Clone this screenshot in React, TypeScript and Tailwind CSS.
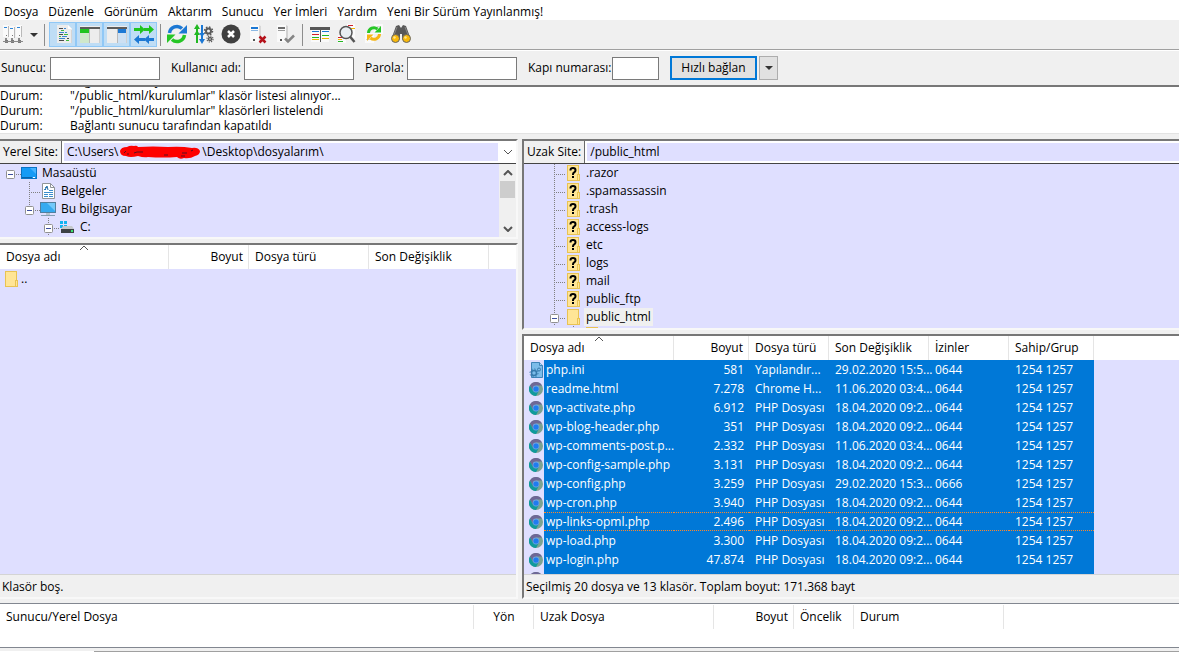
import type { ReactNode } from 'react';
import clsx from 'clsx';

interface RemoteFile {
  name: string;
  size: string;
  type: string;
  modified: string;
  perms: string;
  owner: string;
}

const menuItems = ['Dosya', 'Düzenle', 'Görünüm', 'Aktarım', 'Sunucu', 'Yer İmleri', 'Yardım', 'Yeni Bir Sürüm Yayınlanmış!'];

const logLines = [
  'Bağlantı kuruluyor...',
  '"/public_html/kurulumlar" klasör listesi alınıyor...',
  '"/public_html/kurulumlar" klasörleri listelendi',
  'Bağlantı sunucu tarafından kapatıldı',
];

const remoteFolders = ['.razor', '.spamassassin', '.trash', 'access-logs', 'etc', 'logs', 'mail', 'public_ftp'];

const php = (name: string, size: string, modified = '18.04.2020 09:2...', perms = '0644'): RemoteFile => ({
  name,
  size,
  type: 'PHP Dosyası',
  modified,
  perms,
  owner: '1254 1257',
});

const remoteFiles: RemoteFile[] = [
  { name: 'php.ini', size: '581', type: 'Yapılandır...', modified: '29.02.2020 15:5...', perms: '0644', owner: '1254 1257' },
  { name: 'readme.html', size: '7.278', type: 'Chrome H...', modified: '11.06.2020 03:4...', perms: '0644', owner: '1254 1257' },
  php('wp-activate.php', '6.912'),
  php('wp-blog-header.php', '351'),
  php('wp-comments-post.p...', '2.332', '11.06.2020 03:4...'),
  php('wp-config-sample.php', '3.131'),
  php('wp-config.php', '3.259', '29.02.2020 15:3...', '0666'),
  php('wp-cron.php', '3.940'),
  php('wp-links-opml.php', '2.496'),
  php('wp-load.php', '3.300'),
  php('wp-login.php', '47.874'),
  { name: '', size: '', type: '', modified: '', perms: '', owner: '' },
];

const focusedFile = 'wp-links-opml.php';

/* ---------- Toolbar icons ---------- */

function Svg({ children }: { children: ReactNode }) {
  return (
    <svg width="20" height="20" viewBox="0 0 20 20" fill="none" className="shrink-0" aria-hidden="true">
      {children}
    </svg>
  );
}

function SiteManagerIcon() {
  return (
    <Svg>
      {[0, 6, 13].map((x, i) => (
        <g key={x}>
          <rect x={x} y={i === 1 ? 2 : 1} width="6" height="12" fill="#fafafa" />
          <rect x={x + 5} y={i === 1 ? 3 : 2} width="1" height="11" fill="#b9b9b9" />
          <rect x={x + 1} y={i === 1 ? 4 : 3} width="3" height="1" fill="#2f86d8" />
          <rect x={x + 3} y="11" width="1" height="1" fill="#777" />
          <rect x={x + 2} y="14" width="2" height="2" fill="#8c8c8c" />
          <rect x={x + 2} y="16" width="3" height="3" fill="#777" />
        </g>
      ))}
      <path d="M0 17.500h20" stroke="#8c8c8c" />
    </Svg>
  );
}

function LogIcon() {
  return (
    <Svg>
      <path d="M4 1h11l4 4v14H4z" fill="#ececec" />
      <path d="M15 1v4h4z" fill="#fff" />
      <path d="M18.500 6v13" stroke="#d5d5d5" />
      <path d="M6 4.500h4M6 10.500h4M6 16.500h5" stroke="#4a4a4a" />
      <path d="M8 6.500h3M11 10.500h4M6 12.500h2M13 16.500h3" stroke="#3fb83f" />
      <path d="M6 8.500h5M12 8.500h2M9 12.500h5M6 14.500h6M11 4.500h2" stroke="#3d86cf" />
      <path d="M14 14.500h2" stroke="#4a4a4a" />
    </Svg>
  );
}

function LocalTreeIcon() {
  return (
    <Svg>
      <rect x="0" y="2" width="20" height="17" fill="#ededed" />
      <rect x="0" y="3" width="20" height="2" fill="#5c5c5c" />
      <rect x="0" y="5" width="9" height="4" fill="#1fc41f" />
      <rect x="0" y="9" width="9" height="10" fill="#cfe8cb" />
      <path d="M9.500 5v14" stroke="#b9b9b9" />
      <path d="M19.500 5v14" stroke="#cfcfcf" />
    </Svg>
  );
}

function RemoteTreeIcon() {
  return (
    <Svg>
      <rect x="0" y="2" width="20" height="17" fill="#ededed" />
      <rect x="0" y="3" width="20" height="2" fill="#5c5c5c" />
      <rect x="11" y="5" width="8" height="4" fill="#1c78d4" />
      <rect x="11" y="9" width="8" height="10" fill="#cde0f3" />
      <path d="M10.500 5v14" stroke="#b9b9b9" />
      <path d="M19.500 5v14" stroke="#cfcfcf" />
    </Svg>
  );
}

function QueueIcon() {
  return (
    <Svg>
      <path d="M0 4h6V1l5 4.500L6 10V7H0z" fill="#1fc41f" />
      <path d="M10 4h5V1l5 4.500-5 4.500V7h-5z" fill="#1fc41f" />
      <path d="M20 14h-5v-3l-5 4.500 5 4.500v-3h5z" fill="#1c78d4" />
      <path d="M11 14H5v-3l-5 4.500L5 20v-3h6z" fill="#1c78d4" />
    </Svg>
  );
}

function RefreshIcon() {
  return (
    <Svg>
      <path d="M2.500 9A7.500 7.500 0 0 1 15 4.500" stroke="#1c78d4" strokeWidth="3.500" />
      <path d="M20 1v8.500h-8.500z" fill="#1c78d4" />
      <path d="M17.500 11A7.500 7.500 0 0 1 5 15.500" stroke="#26c626" strokeWidth="3.500" />
      <path d="M0 19v-8.500h8.500z" fill="#26c626" />
    </Svg>
  );
}

function ProcessQueueIcon() {
  return (
    <Svg>
      <path d="M3 19V3" stroke="#22b822" strokeWidth="2" />
      <path d="M0 5l3-5 3 5zM0 11l3-5 3 5z" fill="#22b822" />
      <path d="M8 1v16" stroke="#1c78d4" strokeWidth="2" />
      <path d="M5 15l3 5 3-5zM5 9l3 4 3-4z" fill="#1c78d4" />
      <circle cx="14.500" cy="7" r="2.500" stroke="#5b5b5b" strokeWidth="2" />
      <circle cx="14.500" cy="7" r="4" stroke="#5b5b5b" strokeWidth="1.500" strokeDasharray="1.600 1.540" />
      <circle cx="16" cy="15" r="1.500" stroke="#5b5b5b" strokeWidth="1.500" />
      <circle cx="16" cy="15" r="3" stroke="#5b5b5b" strokeWidth="1.200" strokeDasharray="1.200 1.150" />
    </Svg>
  );
}

function CancelIcon() {
  return (
    <Svg>
      <circle cx="10" cy="10" r="9.500" fill="#404040" />
      <path d="M7 7l6 6M13 7l-6 6" stroke="#fff" strokeWidth="2.500" />
    </Svg>
  );
}

function DisconnectIcon() {
  return (
    <Svg>
      <path d="M2 1h9l2 1v16H2z" fill="#fafafa" />
      <path d="M11 1l2 1v16h-2z" fill="#d8d8d8" />
      <path d="M3 4h7" stroke="#1c78d4" strokeWidth="2" />
      <path d="M3 6.500h7" stroke="#8cb9e4" />
      <rect x="5" y="15" width="2" height="2" fill="#555" />
      <path d="M11.500 12.500l6 6M17.500 12.500l-6 6" stroke="#b5121b" strokeWidth="2.500" />
    </Svg>
  );
}

function ReconnectIcon() {
  return (
    <Svg>
      <path d="M2 1h9l2 1v16H2z" fill="#fafafa" />
      <path d="M11 1l2 1v16h-2z" fill="#d2d2d2" />
      <path d="M3 4h7" stroke="#6d6d6d" strokeWidth="2" />
      <path d="M3 6.500h7" stroke="#9d9d9d" />
      <rect x="5" y="15" width="2" height="2" fill="#555" />
      <path d="M10 14.500l3 3 6-6" stroke="#858585" strokeWidth="2.500" />
    </Svg>
  );
}

function FilterIcon() {
  return (
    <Svg>
      <rect x="1" y="3" width="18" height="15" fill="#fafafa" />
      <rect x="0" y="3" width="20" height="3" fill="#555" />
      <path d="M10.500 5v13" stroke="#555" />
      <path d="M2 7.500h7" stroke="#1c78d4" />
      <path d="M2 10.500h7" stroke="#d0202a" />
      <path d="M2 13.500h7" stroke="#22b822" />
      <path d="M2 15.500h7" stroke="#f0b400" />
      <path d="M12 7.500h7" stroke="#1c78d4" />
      <path d="M12 11.500h7" stroke="#22b822" />
      <path d="M12 14.500h7" stroke="#f0b400" />
    </Svg>
  );
}

function CompareIcon() {
  return (
    <Svg>
      <path d="M10 0h8v14h-8zM1 11h8v8H1z" fill="#fafafa" />
      <path d="M11 1.500h5" stroke="#d0202a" />
      <path d="M14 4.500h4" stroke="#f0b400" />
      <path d="M1 13.500h4" stroke="#d0202a" />
      <path d="M1 15.500h4" stroke="#f0b400" />
      <path d="M1 17.500h5" stroke="#22b822" />
      <circle cx="9" cy="8.500" r="6" fill="#e8eef2" stroke="#555" strokeWidth="1.500" />
      <path d="M13 12.500l4.500 5.500" stroke="#555" strokeWidth="2.500" />
    </Svg>
  );
}

function SyncBrowseIcon() {
  return (
    <Svg>
      <path d="M10 0h9v10h-9zM1 9h9v10H1z" fill="#fafafa" />
      <path d="M2 15.500h4M13 2.500h4" stroke="#d3d3d3" />
      <path d="M4.500 9A5.500 5.500 0 0 1 13.500 5" stroke="#26c626" strokeWidth="3" />
      <path d="M17 2v6.500h-6.500z" fill="#26c626" />
      <path d="M15.500 10A5.500 5.500 0 0 1 6.500 14" stroke="#f5b514" strokeWidth="3" />
      <path d="M3 17v-6.500h6.500z" fill="#f5b514" />
    </Svg>
  );
}

function SearchIcon() {
  return (
    <Svg>
      <path d="M5 2l3-1 2 3 2-3 3 1 4 11-5 5-3-3V10H9v5l-3 3-5-5z" fill="#585858" />
      <path d="M6 3L3 11M14 3l3 8" stroke="#858585" />
      <circle cx="4.500" cy="14.500" r="4" fill="#f9b90a" stroke="#666" />
      <circle cx="15.500" cy="14.500" r="4" fill="#f9b90a" stroke="#666" />
      <circle cx="3.500" cy="13.500" r="1.200" fill="#ffe78c" />
      <circle cx="14.500" cy="13.500" r="1.200" fill="#ffe78c" />
    </Svg>
  );
}

/* ---------- Tree and file icons ---------- */

function FolderIcon({ unknown = false }: { unknown?: boolean }) {
  return (
    <svg width="13" height="16" viewBox="0 0 13 16" className="shrink-0" aria-hidden="true">
      <rect x="0.500" y="0.500" width="11" height="15" fill="#ffe596" stroke="#e9c353" />
      <rect x="10.500" y="9.500" width="2" height="6" fill="#ffe596" stroke="#e9c353" />
      {unknown && (
        <>
          <path d="M3.500 5.500V5Q3.500 3 6 3T8.500 5.200Q8.500 6.500 7.200 7.300T6 9.500V10" stroke="#000" strokeWidth="2" fill="none" />
          <rect x="5" y="11" width="2" height="2" fill="#000" />
        </>
      )}
    </svg>
  );
}

function DesktopIcon() {
  return (
    <svg width="17" height="12" viewBox="0 0 17 12" aria-hidden="true">
      <rect x="0.500" y="0.500" width="15" height="11" fill="#169bf5" stroke="#0b74c4" />
      <path d="M9 1h6v6z" fill="#48b4ff" />
      <path d="M1 10.500h10" stroke="#0a63ab" />
      <path d="M12 10.500h2" stroke="#fff" />
    </svg>
  );
}

function DocumentIcon() {
  return (
    <svg width="13" height="16" viewBox="0 0 13 16" aria-hidden="true">
      <path d="M.5.500h8l4 4v11H.5z" fill="#fff" stroke="#8f9499" />
      <path d="M8.500.500v4h4" fill="none" stroke="#8f9499" />
      <path d="M2 6.500h2M3 4.500h2M2 9.500h9M2 11.500h4M7 11.500h4M2 13.500h4M7 13.500h4M7 7.500h4" stroke="#3b8dcc" />
      <path d="M3 7l2-4 1 4" fill="none" stroke="#246ca5" />
    </svg>
  );
}

function ComputerIcon() {
  return (
    <svg width="17" height="15" viewBox="0 0 17 15" aria-hidden="true">
      <rect x="0.500" y="0.500" width="15" height="10" fill="#36aaf0" stroke="#527f9e" />
      <path d="M7 1h8v8z" fill="#72c8fa" />
      <path d="M6 11h4v2H6z" fill="#b5c3cd" />
      <path d="M1 13.500h14" stroke="#85a0b3" />
    </svg>
  );
}

function DriveIcon() {
  return (
    <svg width="17" height="14" viewBox="0 0 17 14" aria-hidden="true">
      <path d="M1 1h3v3H1zM5 1h3v3H5zM1 5h3v3H1zM5 5h3v3H5z" fill="#11b4f0" />
      <path d="M4 6h9l2 3H2z" fill="#c5c9cc" />
      <rect x="2" y="9" width="13" height="4" fill="#3d4145" />
      <rect x="12" y="10" width="2" height="2" fill="#3ce26f" />
    </svg>
  );
}

function ChromeIcon() {
  return (
    <svg width="14" height="14" viewBox="0 0 14 14" aria-hidden="true">
      <circle cx="7" cy="7" r="7" fill="#7ca391" />
      <path d="M.9 3.500A7 7 0 0 1 13.100 3.500H7L4 8.500z" fill="#6e6796" />
      <path d="M.9 3.500A7 7 0 0 0 7 14l3-5.300H4z" fill="#109a9c" />
      <circle cx="7" cy="7" r="3.400" fill="#6fa3e0" />
      <circle cx="7" cy="7" r="2.600" fill="#1f7cf0" />
    </svg>
  );
}

function IniIcon() {
  return (
    <svg width="14" height="16" viewBox="0 0 14 16" aria-hidden="true">
      <path d="M2.500.500h8l3 3v12h-11z" fill="#7cbce9" stroke="#3f84b8" />
      <path d="M10.500.500v3h3" fill="#a9d6f5" stroke="#3f84b8" />
      <circle cx="5" cy="11" r="2.500" fill="#7cbce9" stroke="#3679ac" strokeWidth="1.500" />
      <circle cx="5" cy="11" r="4" fill="none" stroke="#3679ac" strokeDasharray="1.500 1.600" />
      <circle cx="10" cy="7.500" r="1.500" fill="none" stroke="#3679ac" />
    </svg>
  );
}

function Chevron({ up = false, bold = false }: { up?: boolean; bold?: boolean }) {
  return (
    <svg width="10" height="6" viewBox="0 0 10 6" fill="none" aria-hidden="true">
      <path d={up ? 'M1 5l4-4 4 4' : 'M1 1l4 4 4-4'} stroke="#555" strokeWidth={bold ? 2 : 1} />
    </svg>
  );
}

function DropArrow() {
  return (
    <svg width="8" height="4" viewBox="0 0 8 4" aria-hidden="true">
      <path d="M0 0h8L4 4z" fill="#333" />
    </svg>
  );
}

/* ---------- Building blocks ---------- */

function ToolButton({ label, pressed = false, children }: { label: string; pressed?: boolean; children: ReactNode }) {
  return (
    <button
      type="button"
      aria-label={label}
      aria-pressed={pressed}
      className={clsx(
        'flex h-[25px] w-[27px] shrink-0 items-start border pt-px',
        pressed ? 'border-[#90c8f6] bg-[#bfddf5] pl-[3px]' : 'border-transparent pl-0.5',
      )}
    >
      {children}
    </button>
  );
}

function ToolSeparator({ tight = false }: { tight?: boolean }) {
  return <div className={clsx('h-[22px] w-px shrink-0 bg-[#8d8d8d]', tight ? 'mx-[3px]' : 'ml-[3px] mr-1')} />;
}

function TextField({ label, labelClass, inputClass }: { label: string; labelClass: string; inputClass: string }) {
  return (
    <label className="mr-[11px] flex items-center">
      <span className={clsx('shrink-0 whitespace-nowrap', labelClass)}>{label}</span>
      <input type="text" className={clsx('h-[23px] border border-[#7a7a7a] bg-white px-1', inputClass)} />
    </label>
  );
}

interface TreeRowProps {
  label: string;
  icon: ReactNode;
  indent: number;
  line: number;
  up?: boolean;
  down?: boolean;
  box?: boolean;
  active?: boolean;
}

function TreeRow({ label, icon, indent, line, up, down, box, active }: TreeRowProps) {
  const x = line + 0.5;
  return (
    <li className="flex h-[18px] items-center">
      <svg width={indent} height="18" className="shrink-0" fill="none" aria-hidden="true">
        <g stroke="#808080" strokeDasharray="1 1">
          {up && <path d={`M${x} 0V10`} />}
          {down && <path d={`M${x} 10V18`} />}
          <path d={`M${line} 10.500H${indent}`} />
        </g>
        {box && (
          <>
            <rect x={x - 4} y="6.500" width="8" height="8" rx="1" fill="#fff" stroke="#919191" />
            <path d={`M${line - 2} 10.500h5`} stroke="#3c4fa0" />
          </>
        )}
      </svg>
      <span className="flex w-[19px] shrink-0 justify-center pr-0.5">{icon}</span>
      <span className={clsx('px-0.5 leading-[18px]', active && 'bg-[#f0f0f0]')}>{label}</span>
    </li>
  );
}

function HeaderCell({ children, align = 'left', sorted = false }: { children?: ReactNode; align?: 'left' | 'right' | 'center'; sorted?: boolean }) {
  return (
    <th
      scope="col"
      aria-sort={sorted ? 'ascending' : undefined}
      className={clsx(
        'relative h-6 border-r border-[#e5e5e5] bg-white pr-[5px] pl-1.5 font-normal whitespace-nowrap',
        align === 'left' && 'text-left',
        align === 'right' && 'text-right',
        align === 'center' && 'text-center',
      )}
    >
      {sorted && (
        <span className="absolute top-0 left-1/2 -translate-x-1/2">
          <Chevron up />
        </span>
      )}
      {children}
    </th>
  );
}

function SiteBar({ label, value, id }: { label: string; value: ReactNode; id: string }) {
  return (
    <div className="flex h-[23px] shrink-0 border-b border-[#444]">
      <span id={id} className="flex shrink-0 items-center border-r border-[#696969] px-[3px] whitespace-nowrap">
        {label}
      </span>
      {value}
    </div>
  );
}

function RemoteRow({ file }: { file: RemoteFile }) {
  const focused = file.name === focusedFile;
  const edge = focused && 'border-y border-dotted border-[#ff8728]';
  const cell = clsx('h-[19px] py-0 pl-1.5 leading-[17px] whitespace-nowrap', edge);
  return (
    <tr aria-selected="true" className="bg-[#0078d7] text-white">
      <td className="h-[19px] p-0">
        <div className="flex h-[19px] items-center overflow-hidden">
          <span className="flex h-[19px] w-5 shrink-0 items-center justify-center bg-[#dfdfff] pl-1">
            {file.name === 'php.ini' ? <IniIcon /> : <ChromeIcon />}
          </span>
          <span className={clsx('flex h-[19px] flex-1 items-center pl-0.5 whitespace-nowrap', edge)}>{file.name}</span>
        </div>
      </td>
      <td className={clsx(cell, 'pr-[5px] text-right')}>{file.size}</td>
      <td className={cell}>{file.type}</td>
      <td className={cell}>{file.modified}</td>
      <td className={cell}>{file.perms}</td>
      <td className={cell}>{file.owner}</td>
      <td className="bg-[#dfdfff]" />
    </tr>
  );
}

function StatusBar({ children }: { children: ReactNode }) {
  return (
    <div className="flex h-[23px] shrink-0 items-center border-t border-[#d4d4d4] bg-[#f0f0f0] pt-0.5 pl-0.5 whitespace-nowrap">
      {children}
    </div>
  );
}

/* ---------- Panels ---------- */

function LocalPanel() {
  return (
    <section className="flex min-h-0 min-w-0 flex-col gap-1">
      <div className="border-t-2 border-r-2 border-b-2 border-t-[#777] border-r-[#f8f8f8] border-b-[#f8f8f8]">
        <SiteBar
          id="local-site"
          label="Yerel Site:"
          value={
            <div className="flex min-w-0 flex-1 items-stretch bg-white py-0.5 pl-0.5">
              <div className="flex min-w-0 flex-1 items-center bg-[#dfdfff] pl-[3px] whitespace-nowrap" aria-labelledby="local-site">
                <span>C:\Users\</span>
                <svg width="84" height="16" viewBox="0 0 84 16" className="shrink-0" aria-hidden="true">
                  <path
                    d="M2 7Q3 3 9 3Q12 1 16 2Q19 1 20 3Q35 2 50 3Q63 2 74 4Q80 3 82 7Q82 11 77 12Q72 15 66 14Q62 16 59 13Q45 14 30 13Q26 14 20 12Q12 14 8 12Q2 12 2 7z"
                    fill="#fe0000"
                  />
                  <path d="M6 9l2-2M9 10h2M16 9l3-1h6M46 11h4M63 12h4M64 9h5M73 7l2-1" stroke="#5a1020" fill="none" />
                </svg>
                <span>\Desktop\dosyalarım\</span>
              </div>
              <button type="button" aria-label="Yerel site geçmişi" className="flex w-[18px] shrink-0 items-center justify-center pl-0.5">
                <Chevron />
              </button>
            </div>
          }
        />
        <div className="flex h-[73px] overflow-hidden bg-[#dfdfff]">
          <ul className="min-w-0 flex-1">
            <TreeRow label="Masaüstü" icon={<DesktopIcon />} indent={21} line={10} box />
            <TreeRow label="Belgeler" icon={<DocumentIcon />} indent={40} line={29} up down />
            <TreeRow label="Bu bilgisayar" icon={<ComputerIcon />} indent={40} line={29} up box />
            <TreeRow label="C:" icon={<DriveIcon />} indent={59} line={48} up down box />
          </ul>
          <div className="flex w-[17px] flex-col items-center bg-[#f0f0f0]">
            <button type="button" aria-label="Yukarı" className="flex h-[17px] w-full items-center justify-center">
              <Chevron up bold />
            </button>
            <div className="h-[17px] w-[15px] bg-[#cdcdcd]" />
            <button type="button" aria-label="Aşağı" className="mt-auto flex h-[17px] w-full items-center justify-center">
              <Chevron bold />
            </button>
          </div>
        </div>
      </div>

      <div className="flex min-h-0 flex-1 flex-col border-t-2 border-r-2 border-b-2 border-t-[#777] border-r-[#f8f8f8] border-b-[#f8f8f8]">
        <div className="min-h-0 flex-1 overflow-hidden bg-[#dfdfff]">
          <table className="w-full table-fixed border-separate border-spacing-0">
            <colgroup>
              <col className="w-[169px]" />
              <col className="w-20" />
              <col className="w-[120px]" />
              <col className="w-[120px]" />
              <col />
            </colgroup>
            <thead>
              <tr>
                <HeaderCell sorted>Dosya adı</HeaderCell>
                <HeaderCell align="right">Boyut</HeaderCell>
                <HeaderCell>Dosya türü</HeaderCell>
                <HeaderCell>Son Değişiklik</HeaderCell>
                <th className="bg-white" />
              </tr>
            </thead>
            <tbody>
              <tr>
                <td className="p-0" colSpan={5}>
                  <div className="flex h-[19px] items-center gap-[3px] pl-[5px]">
                    <FolderIcon />
                    <span>..</span>
                  </div>
                </td>
              </tr>
            </tbody>
          </table>
        </div>
        <StatusBar>Klasör boş.</StatusBar>
      </div>
    </section>
  );
}

function RemotePanel() {
  return (
    <section className="flex min-h-0 min-w-0 flex-col gap-1">
      <div className="border-t-2 border-b-2 border-l-2 border-t-[#777] border-b-[#f8f8f8] border-l-[#777]">
        <SiteBar
          id="remote-site"
          label="Uzak Site:"
          value={
            <div className="flex min-w-0 flex-1 bg-white py-0.5 pl-0.5">
              <input
                type="text"
                readOnly
                value="/public_html"
                aria-labelledby="remote-site"
                className="min-w-0 flex-1 bg-[#dfdfff] pl-[3px] outline-none"
              />
            </div>
          }
        />
        <ul className="h-[164px] overflow-hidden bg-[#dfdfff]">
          {remoteFolders.map((name) => (
            <TreeRow key={name} label={name} icon={<FolderIcon unknown />} indent={41} line={30} up down />
          ))}
          <TreeRow label="public_html" icon={<FolderIcon />} indent={41} line={30} up down box active />
          <TreeRow label="" icon={<FolderIcon />} indent={60} line={49} up down />
        </ul>
      </div>

      <div className="flex min-h-0 flex-1 flex-col border-t-2 border-b-2 border-l-2 border-t-[#777] border-b-[#f8f8f8] border-l-[#777]">
        <div className="min-h-0 flex-1 overflow-hidden bg-[#dfdfff]">
          <table className="w-full table-fixed border-separate border-spacing-0">
            <colgroup>
              <col className="w-[150px]" />
              <col className="w-[75px]" />
              <col className="w-20" />
              <col className="w-[100px]" />
              <col className="w-20" />
              <col className="w-[85px]" />
              <col />
            </colgroup>
            <thead>
              <tr>
                <HeaderCell sorted>Dosya adı</HeaderCell>
                <HeaderCell align="right">Boyut</HeaderCell>
                <HeaderCell>Dosya türü</HeaderCell>
                <HeaderCell>Son Değişiklik</HeaderCell>
                <HeaderCell>İzinler</HeaderCell>
                <HeaderCell>Sahip/Grup</HeaderCell>
                <th className="bg-white" />
              </tr>
            </thead>
            <tbody>
              {remoteFiles.map((file) => (
                <RemoteRow key={file.name} file={file} />
              ))}
            </tbody>
          </table>
        </div>
        <StatusBar>Seçilmiş 20 dosya ve 13 klasör. Toplam boyut: 171.368 bayt</StatusBar>
      </div>
    </section>
  );
}

function TransferQueue() {
  return (
    <section className="mt-1 shrink-0">
      <div className="h-[45px] border-y border-[#828790] bg-white pt-px">
        <table className="w-full table-fixed border-separate border-spacing-0">
          <colgroup>
            <col className="w-[474px]" />
            <col className="w-[60px]" />
            <col className="w-[180px]" />
            <col className="w-20" />
            <col className="w-[60px]" />
            <col className="w-[150px]" />
            <col />
          </colgroup>
          <thead>
            <tr>
              <HeaderCell>Sunucu/Yerel Dosya</HeaderCell>
              <HeaderCell align="center">Yön</HeaderCell>
              <HeaderCell>Uzak Dosya</HeaderCell>
              <HeaderCell align="right">Boyut</HeaderCell>
              <HeaderCell>Öncelik</HeaderCell>
              <HeaderCell>Durum</HeaderCell>
              <th />
            </tr>
          </thead>
        </table>
      </div>
      <div className="flex h-1 items-end">
        <div className="h-px w-[94px] bg-white" />
        <div className="h-px flex-1 bg-[#a0a0a0]" />
      </div>
    </section>
  );
}

export default function App() {
  return (
    <div className="flex h-screen flex-col overflow-hidden bg-[#f0f0f0] font-['Open_Sans','Noto_Sans',sans-serif] text-[12px] leading-[18px] text-black">
      <nav className="flex h-5 shrink-0 items-end gap-2.5 bg-white pl-1 leading-4 whitespace-nowrap">
        {menuItems.map((item) => (
          <button key={item} type="button">
            {item}
          </button>
        ))}
      </nav>

      <div className="flex h-[30px] shrink-0 items-center border-b border-[#a0a0a0]">
        <ToolButton label="Site Yöneticisi">
          <SiteManagerIcon />
        </ToolButton>
        <button type="button" aria-label="Site listesi" className="flex h-[25px] w-3.5 items-center justify-center">
          <DropArrow />
        </button>
        <ToolSeparator />
        <ToolButton label="Mesaj günlüğü" pressed>
          <LogIcon />
        </ToolButton>
        <ToolButton label="Yerel klasör ağacı" pressed>
          <LocalTreeIcon />
        </ToolButton>
        <ToolButton label="Uzak klasör ağacı" pressed>
          <RemoteTreeIcon />
        </ToolButton>
        <ToolButton label="Aktarım kuyruğu" pressed>
          <QueueIcon />
        </ToolButton>
        <ToolSeparator tight />
        <ToolButton label="Yenile">
          <RefreshIcon />
        </ToolButton>
        <ToolButton label="Kuyruğu işle">
          <ProcessQueueIcon />
        </ToolButton>
        <ToolButton label="İptal">
          <CancelIcon />
        </ToolButton>
        <ToolButton label="Bağlantıyı kes">
          <DisconnectIcon />
        </ToolButton>
        <ToolButton label="Yeniden bağlan">
          <ReconnectIcon />
        </ToolButton>
        <ToolSeparator />
        <ToolButton label="Filtreler">
          <FilterIcon />
        </ToolButton>
        <ToolButton label="Karşılaştır">
          <CompareIcon />
        </ToolButton>
        <ToolButton label="Eşzamanlı gezinme">
          <SyncBrowseIcon />
        </ToolButton>
        <ToolButton label="Dosya ara">
          <SearchIcon />
        </ToolButton>
      </div>

      {/* Quick connect */}
      <form className="flex h-[35px] shrink-0 items-center border-t border-white pl-px" onSubmit={(e) => e.preventDefault()}>
        <TextField label="Sunucu:" labelClass="w-[49px]" inputClass="w-[110px]" />
        <TextField label="Kullanıcı adı:" labelClass="w-[73px]" inputClass="w-[110px]" />
        <TextField label="Parola:" labelClass="w-[42px]" inputClass="w-[110px]" />
        <TextField label="Kapı numarası:" labelClass="w-[84px]" inputClass="w-[47px]" />
        <button type="submit" className="h-6 w-[87px] shrink-0 border-2 border-[#0078d7] bg-[#e1e1e1] leading-5 whitespace-nowrap">
          Hızlı bağlan
        </button>
        <button
          type="button"
          aria-label="Bağlantı geçmişi"
          className="ml-0.5 flex h-6 w-[19px] shrink-0 items-center justify-center border border-[#adadad] bg-[#e1e1e1]"
        >
          <DropArrow />
        </button>
      </form>

      {/* Message log */}
      <div className="mb-[5px] flex h-[49px] shrink-0 flex-col justify-end overflow-hidden border-t-2 border-b border-t-[#777] border-b-[#e3e3e3] bg-white">
        {logLines.map((line) => (
          <div key={line} className="flex h-[15px] shrink-0 items-center leading-[15px] whitespace-nowrap">
            <span className="w-[70px] shrink-0">Durum:</span>
            <span>{line}</span>
          </div>
        ))}
      </div>

      <main className="grid min-h-0 flex-1 grid-cols-[518fr_657fr] grid-rows-[minmax(0,1fr)] gap-x-1">
        <LocalPanel />
        <RemotePanel />
      </main>

      <TransferQueue />
    </div>
  );
}
